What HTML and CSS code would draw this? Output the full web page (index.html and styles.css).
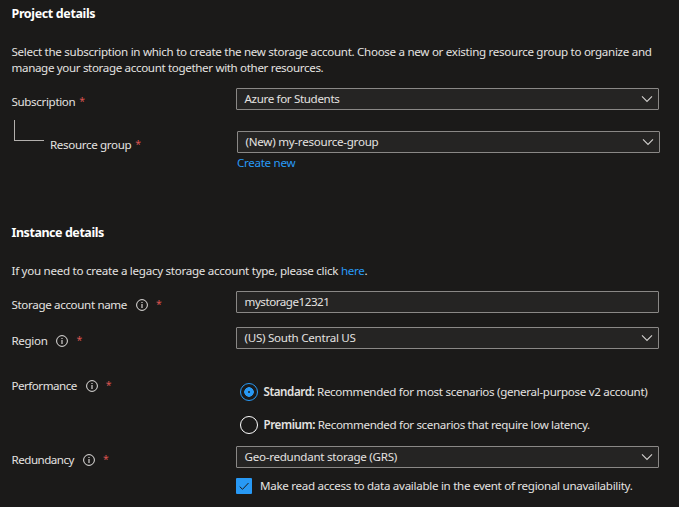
FILE: index.html
```
<!DOCTYPE html>
<html lang="en">
<head>
<meta charset="utf-8">
<title>Create a storage account</title>
<link rel="stylesheet" href="styles.css">
</head>
<body>
<svg class="defs" aria-hidden="true">
  <symbol id="chevron" viewBox="0 0 12 8"><path d="M1 1.4 6 6.4 11 1.4" fill="none" stroke="#d2d0ce" stroke-width="1.1"/></symbol>
  <symbol id="info" viewBox="0 0 12 12"><circle cx="6" cy="6" r="5.4" fill="none" stroke="currentColor" stroke-width="1"/><path d="M6 5v4M6 3v1.1" fill="none" stroke="currentColor" stroke-width="1.1"/></symbol>
</svg>
<main class="form">
  <section class="project">
    <h2 class="t-project">Project details</h2>
    <p class="intro"><span class="t-intro1">Select the subscription in which to create the new storage account. Choose a new or existing resource group to organize and</span><br><span class="t-intro2">manage your storage account together with other resources.</span></p>
    <div class="row subscription">
      <div class="label"><span class="t-sub">Subscription</span><i class="req">*</i></div>
      <div class="field"><span class="t-azure">Azure for Students</span><svg class="chevron"><use href="#chevron"/></svg></div>
    </div>
    <div class="row resource">
      <div class="label nested"><span class="elbow"></span><span class="t-rg">Resource group</span><i class="req">*</i></div>
      <div class="control">
        <div class="field"><span class="t-new">(New) my-resource-group</span><svg class="chevron"><use href="#chevron"/></svg></div>
        <a class="create">Create new</a>
      </div>
    </div>
  </section>
  <section class="instance">
    <h2 class="t-instance">Instance details</h2>
    <p class="legacy">If you need to create a legacy storage account type, please click <a>here</a>.</p>
    <div class="row name">
      <div class="label"><span class="t-name">Storage account name</span><svg class="info"><use href="#info"/></svg><i class="req">*</i></div>
      <div class="field"><span class="t-value">mystorage12321</span></div>
    </div>
    <div class="row region">
      <div class="label"><span class="t-region">Region</span><svg class="info"><use href="#info"/></svg><i class="req">*</i></div>
      <div class="field"><span class="t-us">(US) South Central US</span><svg class="chevron"><use href="#chevron"/></svg></div>
    </div>
    <div class="row performance">
      <div class="label"><span class="t-perf">Performance</span><svg class="info"><use href="#info"/></svg><i class="req">*</i></div>
      <div class="options">
        <div class="option"><span class="radio checked"></span><span class="t-standard"><b>Standard:</b> Recommended for most scenarios (general-purpose v2 account)</span></div>
        <div class="option"><span class="radio"></span><span class="t-premium"><b>Premium:</b> Recommended for scenarios that require low latency.</span></div>
      </div>
    </div>
    <div class="row redundancy">
      <div class="label"><span class="t-red">Redundancy</span><svg class="info"><use href="#info"/></svg><i class="req">*</i></div>
      <div class="control">
        <div class="field"><span class="t-grs">Geo-redundant storage (GRS)</span><svg class="chevron"><use href="#chevron"/></svg></div>
        <div class="check"><span class="box"><svg width="16" height="16" viewBox="0 0 16 16"><path d="M3.7 8.6 6.5 11.3 12.5 5" fill="none" stroke="#1b1a19" stroke-width="1"/></svg></span><span>Make read access to data available in the event of regional unavailability.</span></div>
      </div>
    </div>
  </section>
</main>
</body>
</html>
```
FILE: styles.css
```
* { box-sizing: border-box; }
body {
  margin: 0;
  background: #1b1a19;
  color: #e4e2e0;
  font: 11.6px/16px "Noto Sans", "Open Sans", sans-serif;
  letter-spacing: -.3px;
  white-space: nowrap;
}
.defs { display: none; }
.form { width: 679px; height: 507px; padding: 6px 19px 0 11.5px; overflow: hidden; }
h2 { margin: 0; font-size: 12.5px; line-height: 16px; font-weight: 700; color: #fff; }
p { margin: 0; }
a { color: #2899f5; }
.t-project { letter-spacing: -.37px; }
.t-instance { letter-spacing: -.45px; }
.t-intro2, .t-sub, .t-azure, .t-rg, .t-region, .t-premium { letter-spacing: -.35px; }
.t-standard { letter-spacing: -.31px; }
.option b { font-weight: 600; letter-spacing: -.42px; }
.t-new { letter-spacing: -.26px; }
.t-us, .t-grs { letter-spacing: -.27px; }
.legacy { letter-spacing: -.28px; }
.t-name { letter-spacing: -.35px; }
.t-value { letter-spacing: -.46px; }
.t-perf, .t-red { letter-spacing: -.5px; }
.intro { margin-top: 22px; }
.row { display: grid; grid-template-columns: 224.5px 423px; align-items: start; }
.label { display: flex; align-items: center; height: 16px; }
.req { color: #d9534f; font-size: 10.5px; font-style: normal; margin: -2px 0 0 4px; }
.info { width: 12px; height: 12px; margin: 0 4px 0 9px; }
.field {
  display: flex; align-items: center; justify-content: space-between;
  height: 22px; padding: 0 5px 0 7.5px;
  border: 1px solid #8a8886; border-radius: 1px; background: #252423;
}
.chevron { width: 12px; height: 8px; }
.subscription { margin-top: 12px; }
.subscription .label { margin-top: 6px; }
.resource { margin-top: 9px; }
.resource .control { margin: 12px -1px 0 1px; }
.nested { height: 34px; align-items: flex-end; }
.elbow { width: 30px; height: 21px; margin: 0 6px 12px 2.5px; border: solid #b3b0ad; border-width: 0 0 1px 1px; }
.nested .req { margin-bottom: 1px; }
.create { display: block; margin-top: 2px; }
.instance { margin-top: 54px; }
.legacy { margin-top: 22px; }
.name { margin-top: 12px; }
.name .label, .region .label { margin-top: 6px; }
.region { margin-top: 14px; }
.performance { margin-top: 29px; }
.options { padding: 5px 0 0 4px; }
.option { display: flex; align-items: center; gap: 5.5px; height: 18px; margin-bottom: 15px; }
.radio { flex: none; width: 18px; height: 18px; border: 1px solid #fff; border-radius: 50%; }
.radio.checked { border-color: #2899f5; background: radial-gradient(circle, #1b1a19 0 .6px, #2899f5 1px 4.5px, transparent 5px); }
.redundancy { margin-top: -3px; }
.redundancy .label { margin-top: 6px; }
.check { display: flex; align-items: center; gap: 8px; height: 16px; margin-top: 10px; }
.box { flex: none; width: 16px; height: 16px; border-radius: 1px; background: #2899f5; }
.box svg { display: block; }
```
